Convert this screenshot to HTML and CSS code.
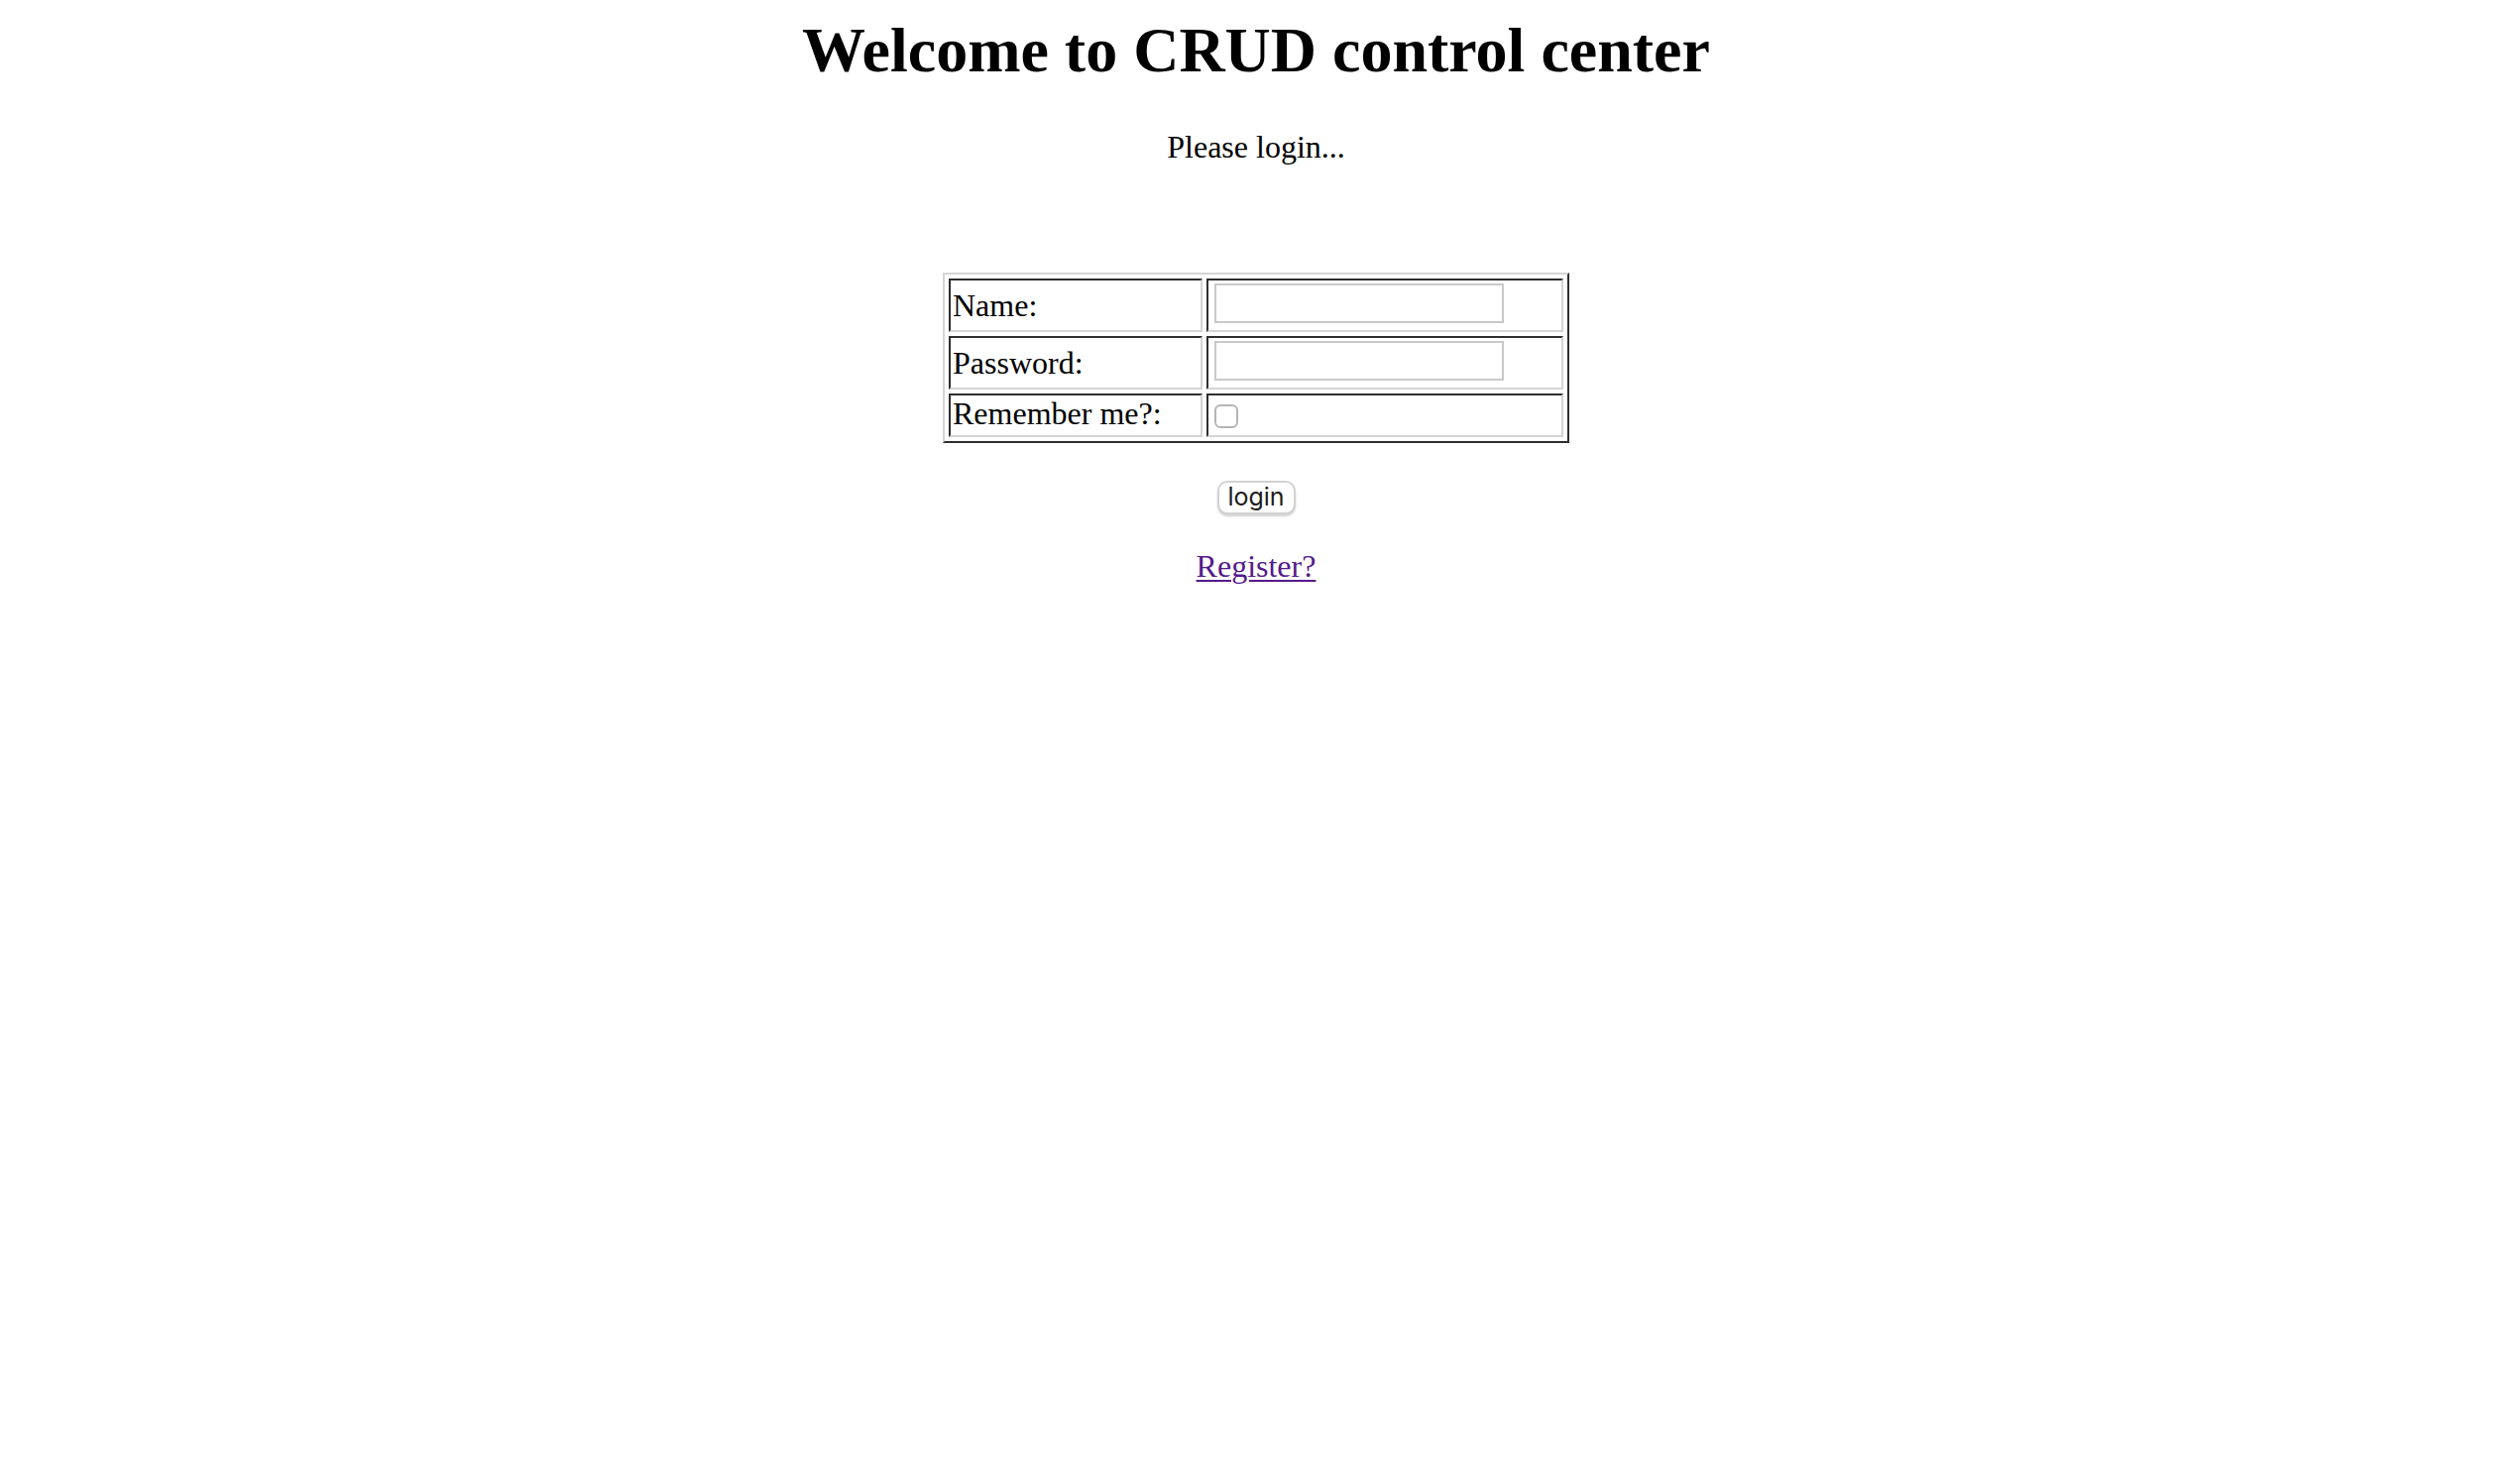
FILE: index.html
```html
<!DOCTYPE html>
<html>
<head>
<meta charset="utf-8">
<title>CRUD control center</title>
<link rel="stylesheet" href="styles.css">
</head>
<body>
<div class="page">
  <h1 class="title">Welcome to CRUD control center</h1>
  <p class="lead">Please login...</p>
  <form class="login-form">
    <table class="login-table">
      <tr class="row">
        <td class="label-cell"><span class="label">Name:</span></td>
        <td class="field-cell"><input class="text-input" type="text" name="name"></td>
      </tr>
      <tr class="row">
        <td class="label-cell"><span class="label">Password:</span></td>
        <td class="field-cell"><input class="text-input" type="password" name="password"></td>
      </tr>
      <tr class="row row-small">
        <td class="label-cell"><span class="label label-small">Remember me?:</span></td>
        <td class="field-cell"><input class="check" type="checkbox" name="remember"></td>
      </tr>
    </table>
    <div class="actions">
      <button class="login-btn" type="submit">login</button>
    </div>
  </form>
  <p class="register"><a class="register-link" href="#">Register?</a></p>
</div>
</body>
</html>
```
FILE: styles.css
```css
html, body {
  margin: 0;
  padding: 0;
  background: #ffffff;
}

body {
  font-family: "Liberation Serif", "Times New Roman", serif;
  font-size: 32px;
  color: #000000;
}

.page {
  padding: 0 24px 0 16px;
  text-align: center;
}

.title {
  margin: 14px 0 0;
  font-size: 64px;
  font-weight: bold;
  line-height: 74px;
}

.lead {
  margin: 42px 0 0;
  line-height: 37px;
}

.login-form {
  margin: 108px 0 0;
}

.login-table {
  margin: 0 auto;
  border-collapse: separate;
  border-spacing: 4px;
  border-style: solid;
  border-width: 2px;
  border-color: #d4d4d4 #2e2e2e #2e2e2e #d4d4d4;
  text-align: left;
}

.login-table td {
  padding: 2px;
  vertical-align: top;
  border-style: solid;
  border-width: 2px;
  border-color: #2e2e2e #d4d4d4 #d4d4d4 #2e2e2e;
}

.label-cell {
  width: 248px;
}

.field-cell {
  width: 352px;
}

.label {
  display: block;
  line-height: 46px;
  height: 46px;
}

.label-small {
  line-height: 33px;
  height: 36px;
}

.text-input {
  display: block;
  box-sizing: border-box;
  width: 292px;
  height: 40px;
  margin: 1px 0 5px 4px;
  padding: 0 4px;
  border: 2px solid #c9c9c9;
  border-radius: 0;
  background: #ffffff;
  font-size: 26px;
  outline: none;
}

.check {
  -webkit-appearance: none;
  appearance: none;
  display: block;
  box-sizing: border-box;
  width: 24px;
  height: 24px;
  margin: 7px 0 5px 4px;
  border: 2px solid #b5b5b5;
  border-radius: 6px;
  background: #ffffff;
}

.actions {
  margin-top: 34px;
}

.login-btn {
  box-sizing: border-box;
  width: 79px;
  height: 34px;
  padding: 0;
  margin: 0;
  font-family: Inter, "Liberation Sans", sans-serif;
  font-size: 25px;
  line-height: 27px;
  color: #1c1c1c;
  background: #ffffff;
  border: 2px solid #d2d2d2;
  border-radius: 10px;
  box-shadow: 0 2px 2px rgba(0, 0, 0, 0.18);
}

.register {
  margin: 34px 0 0;
  line-height: 37px;
}

.register-link {
  color: #551a8b;
  text-decoration: underline;
  text-decoration-thickness: 2px;
  text-underline-offset: 3px;
}
```
